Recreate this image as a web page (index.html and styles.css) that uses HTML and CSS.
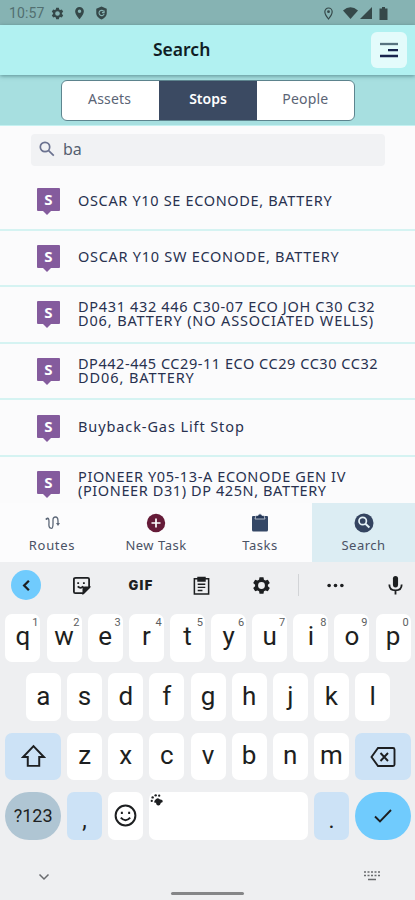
FILE: index.html
```html
<!DOCTYPE html>
<html lang="en">
<head>
<meta charset="utf-8">
<title>Search</title>
<link rel="stylesheet" href="styles.css">
</head>
<body>
<div class="status">
  <span class="clock">10:57</span>
  <svg class="st-gear" viewBox="0 0 24 24"><use href="#gear"/></svg>
  <svg class="st-pin" viewBox="0 0 12 16"><path fill-rule="evenodd" d="M6 1a5 5 0 0 0-5 5c0 4 5 9 5 9s5-5 5-9a5 5 0 0 0-5-5zm0 3a2 2 0 1 1 0 4 2 2 0 0 1 0-4z"/></svg>
  <svg class="st-shield" viewBox="0 0 14 16"><path d="M7 .5 13 3v5c0 4-3 6-6 7.500C4 14 1 12 1 8V3z"/><path d="M9.500 6A3 3 0 1 0 10 9M7.500 7.500h2.500V5" fill="none" stroke="#86b3b3" stroke-width="1.300"/></svg>
  <span class="spacer"></span>
  <svg class="st-loc" viewBox="0 0 12 16"><path d="M6 2a4 4 0 0 0-4 4c0 3 4 8 4 8s4-5 4-8a4 4 0 0 0-4-4z" fill="none" stroke="#354849" stroke-width="1.300"/><circle cx="6" cy="6" r="1.500"/></svg>
  <svg class="st-wifi" viewBox="0 0 15 12"><path d="M0 3.500Q7.500-3 15 3.500L7.500 12z"/></svg>
  <svg class="st-cell" viewBox="0 0 12 12"><path d="M12 0v12H0z"/></svg>
  <svg class="st-batt" viewBox="0 0 9 13"><path d="M3 0h3v1.500h2.500V13h-8V1.500H3z"/></svg>
</div>
<header class="header">
  <h1>Search</h1>
  <button class="menu"><svg viewBox="0 0 20 16"><path d="M1 2h18" stroke="#577380"/><path d="M9 8.200h10M1 14h18" stroke="#17234d"/></svg></button>
</header>
<div class="filter">
  <div class="segments">
    <div class="seg assets">Assets</div><div class="seg on">Stops</div><div class="seg people">People</div>
  </div>
</div>
<main class="results">
  <div class="search"><svg viewBox="0 0 16 16"><circle cx="6" cy="6" r="4.700"/><path d="m9.600 9.600 5.200 5"/></svg><span>ba</span></div>
  <div class="row"><b class="badge">S</b><p><span class="l1">OSCAR Y10 SE ECONODE, BATTERY</span></p></div>
  <div class="row"><b class="badge">S</b><p><span class="l2">OSCAR Y10 SW ECONODE, BATTERY</span></p></div>
  <div class="row"><b class="badge">S</b><p><span class="l3">DP431 432 446 C30-07 ECO JOH C30 C32</span><span class="l4">D06, BATTERY (NO ASSOCIATED WELLS)</span></p></div>
  <div class="row"><b class="badge">S</b><p><span class="l5">DP442-445 CC29-11 ECO CC29 CC30 CC32</span><span class="l6">DD06, BATTERY</span></p></div>
  <div class="row"><b class="badge">S</b><p><span class="l7">Buyback-Gas Lift Stop</span></p></div>
  <div class="row"><b class="badge">S</b><p><span class="l8">PIONEER Y05-13-A ECONODE GEN IV</span><span class="l9">(PIONEER D31) DP 425N, BATTERY</span></p></div>
</main>
<nav class="tabs">
  <div class="tab"><svg viewBox="0 0 20 20"><path d="M4.500 6Q7 3.500 7 9q-.5 6 1.500 6 2.500 1.500 2.500-4V7q0-3 2.500-3T16 8v3" fill="none" stroke="#5d6878" stroke-width="1.300"/><circle cx="4.500" cy="6" r="1" fill="#5d6878"/><path d="m14 10 2 3 2-3" fill="#5d6878"/></svg><span class="t-routes">Routes</span></div>
  <div class="tab"><svg viewBox="0 0 20 20"><circle cx="10" cy="10" r="9.200" fill="#651b38"/><path d="M5.500 10h9M10 5.500v9" stroke="#fff" stroke-width="1.700"/></svg><span class="t-new">New Task</span></div>
  <div class="tab"><svg viewBox="0 0 20 20"><path d="M3 3h14q1 0 1 1v13q0 1.500-1.500 1.500h-13Q2 18.500 2 17V4q0-1 1-1z" fill="#344766"/><path d="M6 2.500h2q2-3.500 4 0h2L15 6H5z" fill="#263858" stroke="#e5eaf0" stroke-width=".7"/></svg><span class="t-tasks">Tasks</span></div>
  <div class="tab active"><svg viewBox="0 0 20 20"><circle cx="10" cy="10" r="9.500" fill="#344460"/><circle cx="8.700" cy="8" r="3.700" fill="none" stroke="#e5f2f7" stroke-width="1.700"/><path d="m11.400 10.800 4 3.700" stroke="#e5f2f7" stroke-width="2"/></svg><span class="t-search">Search</span></div>
</nav>
<section class="keyboard">
  <div class="tools">
    <div class="tool back"><svg viewBox="0 0 20 20"><path d="m12.500 5-5 5 5 5"/></svg></div>
    <div class="tool"><svg viewBox="0 0 20 20"><path d="M4 2h12.500q1.500 0 1.500 1.500V12l-6 6H3.500Q2 18 2 16.500V3.500Q2 2 4 2z"/><path d="M12 18v-4.500q0-1.500 1.500-1.500H18z" fill="#1d1f21"/><path d="M6.500 6.500v2M12.500 6.500v2M6 11q3 3 6 0"/></svg></div>
    <div class="tool gif">GIF</div>
    <div class="tool"><svg viewBox="0 0 20 20"><path d="M2.500 3h15v16h-15z" fill="none" stroke-width="1.600"/><path d="M6.500 1.800h7V5h-7z" fill="#1d1f21"/><path d="M6 8.700h8M6 12h8M6 15.200h5" stroke-width="1.500"/></svg></div>
    <div class="tool"><svg class="gear" viewBox="0 0 24 24"><use href="#gear"/></svg></div>
    <i class="divider"></i>
    <div class="tool"><svg viewBox="0 0 20 20" class="solid"><circle cx="3.300" cy="10" r="1.900"/><circle cx="10" cy="10" r="1.900"/><circle cx="16.700" cy="10" r="1.900"/></svg></div>
    <div class="tool mic"><svg viewBox="0 0 20 20"><rect x="7.300" y="0" width="5.400" height="12" rx="2.700" fill="#1d1f21" stroke="none"/><path d="M3.500 9q0 6.200 6.500 6.200T16.500 9M10 15v4.500"/></svg></div>
  </div>
  <div class="keys">
    <div class="k">q<sup>1</sup></div><div class="k">w<sup>2</sup></div><div class="k">e<sup>3</sup></div><div class="k">r<sup>4</sup></div><div class="k">t<sup>5</sup></div><div class="k">y<sup>6</sup></div><div class="k">u<sup>7</sup></div><div class="k">i<sup>8</sup></div><div class="k">o<sup>9</sup></div><div class="k">p<sup>0</sup></div>
  </div>
  <div class="keys">
    <div class="k">a</div><div class="k">s</div><div class="k">d</div><div class="k">f</div><div class="k">g</div><div class="k">h</div><div class="k">j</div><div class="k">k</div><div class="k">l</div>
  </div>
  <div class="keys">
    <div class="k wide"><svg class="shift" viewBox="0 0 24 24"><path d="M12 2 2 12.500H6.500V21h11v-8.500H22z"/></svg></div><div class="k">z</div><div class="k">x</div><div class="k">c</div><div class="k">v</div><div class="k">b</div><div class="k">n</div><div class="k">m</div><div class="k wide"><svg class="bksp" viewBox="0 0 26 22"><path d="M8 2h15q1.500 0 1.500 1.500v15q0 1.500-1.500 1.500H8l-6.500-9z"/><path d="m10.500 7 7.500 8m0-8-7.500 8"/></svg></div>
  </div>
  <div class="keys">
    <div class="k wide sym">?123</div><div class="k blue low">,</div><div class="k"><svg class="smile" viewBox="0 0 24 24"><circle cx="12" cy="12" r="9.500"/><path d="M8.500 8.500v2M15.500 8.500v2M7.500 14q4.500 5 9 0"/></svg></div>
    <div class="k space"><svg viewBox="0 0 16 16"><path d="M5 9q3-5 6-2l3 1q1.500 3-1.500 3-1 4-4 3-2-1-1.500-3Q4 12 5 9z"/><circle cx="2" cy="9" r="1.300"/><circle cx="3" cy="5" r="1.400"/><circle cx="6.500" cy="2.700" r="1.400"/><circle cx="10.500" cy="3" r="1.300"/></svg></div>
    <div class="k blue low">.</div><div class="k wide enter"><svg class="check" viewBox="0 0 20 16"><path d="m2 8.500 5 5L18 2"/></svg></div>
  </div>
  <div class="sysnav">
    <svg class="down" viewBox="0 0 12 8"><path d="m1.500 1.500 4.500 4.500 4.500-4.500"/></svg>
    <i class="home"></i>
    <svg class="kbd" viewBox="0 0 18 12"><path d="M1 2h16M1 5.500h16" stroke-dasharray="2 1.500"/><path d="M5 9.500h8"/></svg>
  </div>
</section>
<svg class="defs"><defs><path id="gear" fill-rule="evenodd" d="M9.500 1.500h5l.6 3.100 1.900 1.100 3-1.100 2.500 4.300-2.400 2v2.200l2.400 2-2.500 4.300-3-1.100-1.900 1.100-.6 3.100h-5l-.6-3.100L7 18.300l-3 1.100-2.500-4.300 2.400-2v-2.200l-2.400-2L4 4.600l3 1.100 1.900-1.100zM12 7.700a4.300 4.300 0 1 0 0 8.600 4.300 4.300 0 0 0 0-8.600z"/></defs></svg>
</body>
</html>
```
FILE: styles.css
```css
* { box-sizing: border-box; }
body {
  margin: 0;
  width: 415px;
  height: 900px;
  overflow: hidden;
  display: flex;
  flex-direction: column;
  background: #fbfbfc;
  font-family: "Noto Sans", sans-serif;
  color: #28314f;
}
svg { display: block; flex: none; }
.defs { width: 0; height: 0; position: absolute; }

.status {
  height: 25px;
  flex: none;
  display: flex;
  align-items: center;
  padding: 1px 27px 0 9px;
  background: #86b3b3;
  fill: #354849;
}
.clock { width: 42px; font: 14px Roboto, sans-serif; letter-spacing: .1px; color: #526f70; }
.st-gear { width: 13px; height: 13px; }
.st-pin { width: 11px; height: 14px; margin-left: 10px; }
.st-shield { width: 13px; height: 14px; margin-left: 10px; }
.spacer { flex: 1; }
.st-loc { width: 11px; height: 15px; }
.st-wifi { width: 15px; height: 12px; margin-left: 9px; }
.st-cell { width: 12px; height: 12px; margin-left: 2px; }
.st-batt { width: 9px; height: 13px; margin-left: 7px; }

.header {
  height: 50px;
  flex: none;
  display: flex;
  justify-content: space-between;
  align-items: center;
  padding: 0 8px 0 153px;
  background: #b1f1f1;
  box-shadow: 0 1px 4px rgba(40, 90, 95, .6);
  z-index: 1;
}
h1 { margin: 0; padding-bottom: 3px; font-size: 17.500px; font-weight: 600; line-height: 24px; color: #101d24; }
.menu { width: 36px; height: 36px; padding: 0; border: 0; border-radius: 6px; background: #e3fbfb; display: grid; place-items: center; }
.menu svg { width: 20px; height: 16px; stroke-width: 2.300; }

.filter { height: 51px; flex: none; padding: 5px 60px 0 61px; background: #a7dfe0; border-bottom: 1px solid #c5f1f1; }
.segments { height: 41px; display: grid; grid-template-columns: 1fr 1fr 1fr; border: 1px solid #5d858f; border-radius: 6px; overflow: hidden; background: #fff; }
.seg { text-align: center; font-size: 14px; line-height: 36px; color: #5b6475; letter-spacing: .2px; }
.seg.assets { padding-right: 2px; }
.seg.on { background: #3b4a62; color: #fff; font-weight: 600; letter-spacing: 0; }

.results { height: 377px; flex: none; overflow: hidden; padding-top: 8px; }
.search { height: 32px; margin: 0 30px 8px 31px; padding: 0 0 2px 8px; display: flex; align-items: center; gap: 8px; border-radius: 4px; background: #f1f2f4; font-size: 16px; color: #555f70; }
.search svg { width: 16px; height: 16px; fill: none; stroke: #6b7290; stroke-width: 1.700; }
.row { height: 56.600px; display: flex; align-items: center; padding: 0 0 3px 37px; border-bottom: 2px solid #d5f3f2; }
.badge { width: 23px; height: 23px; position: relative; margin-right: 18px; background: #845b9d; border-radius: 1px; color: #fff; font-size: 15px; line-height: 23px; text-align: center; }
.badge::after { content: ""; position: absolute; left: 6px; top: 23px; border: solid transparent; border-width: 4px 4px 0; border-top-color: #845b9d; }
p { margin: 0; font-size: 14.500px; line-height: 14px; white-space: nowrap; }
p span { display: block; width: max-content; }
.l1 { letter-spacing: .66px; }
.l2 { letter-spacing: .72px; }
.l3 { letter-spacing: .67px; }
.l4 { letter-spacing: .86px; }
.l5 { letter-spacing: .54px; }
.l6 { letter-spacing: .92px; }
.l7 { letter-spacing: .9px; }
.l8 { letter-spacing: .62px; }
.l9 { letter-spacing: .6px; }

.tabs { height: 59px; flex: none; display: grid; grid-template-columns: 104px 104px 104px 103px; background: #fcfcfd; }
.tab { display: flex; flex-direction: column; align-items: center; padding-top: 10px; font-size: 13px; line-height: 18px; gap: 3px; letter-spacing: .5px; color: #4a5265; }
.tab svg { width: 20px; height: 20px; }
.t-routes { letter-spacing: .7px; }
.tab.active { background: #dcedf3; }

.keyboard { flex: 1; background: #eeeff1; color: #1d1f21; font-family: Roboto, sans-serif; }
.tools { height: 52px; padding: 0 0 6px 11px; display: grid; grid-template-columns: 30px 80px 40px 80px 41px 33px 41px 48px; align-items: center; justify-items: center; }
.tool svg { width: 19px; height: 19px; fill: none; stroke: #1d1f21; stroke-width: 1.900; }
.tool .gear, .tool .solid { fill: #1d1f21; stroke: none; }
.mic { margin-left: 30px; }
.back { width: 30px; height: 30px; display: grid; place-items: center; border-radius: 50%; background: #70cbfd; }
.tool.back svg { stroke-width: 2.400; }
.gif { font: 900 13px Inter, sans-serif; letter-spacing: 1.300px; }
.divider { width: 1px; height: 22px; background: #d2d4d7; }
.keys { height: 47.500px; margin-bottom: 11.900px; padding-left: 1px; display: flex; justify-content: center; gap: 6.150px; }
.k { width: 35px; position: relative; display: flex; align-items: center; justify-content: center; border-radius: 7px; background: #fff; font-size: 26px; line-height: 30px; padding-bottom: 3px; }
.k sup { position: absolute; right: 2px; top: 2px; font-size: 11px; line-height: 13px; color: #5c5e60; }
.k svg { fill: none; stroke: #1d1f21; stroke-width: 1.900; }
.wide { width: 55.500px; background: #cce2f6; }
.wide svg { margin-top: 3px; }
.blue { background: #cce2f6; }
.sym { background: #afc5d3; border-radius: 24px; font-size: 18px; padding: 0; }
.enter { background: #70cbfd; border-radius: 24px; }
.low { padding-top: 14px; font-size: 23px; }
.space { width: 158.500px; justify-content: flex-start; align-items: flex-start; }
.k.space svg { width: 14px; height: 14px; margin: 1px; fill: #1d1f21; stroke: none; }
.shift { width: 25px; height: 25px; }
.bksp { width: 26px; height: 22px; }
.smile { width: 25px; height: 25px; margin-top: 3px; }
.check { width: 20px; height: 16px; }
.sysnav { height: 48px; display: grid; grid-template-columns: 1fr 73px 1fr; align-items: center; padding-top: 1px; fill: none; stroke: #696b6e; stroke-width: 1.500; }
.down { width: 12px; height: 8px; margin: 1px 0 0 38px; }
.home { height: 3px; border-radius: 2px; background: #858688; margin-top: 35px; }
.kbd { width: 18px; height: 12px; margin-left: 119px; }
```
